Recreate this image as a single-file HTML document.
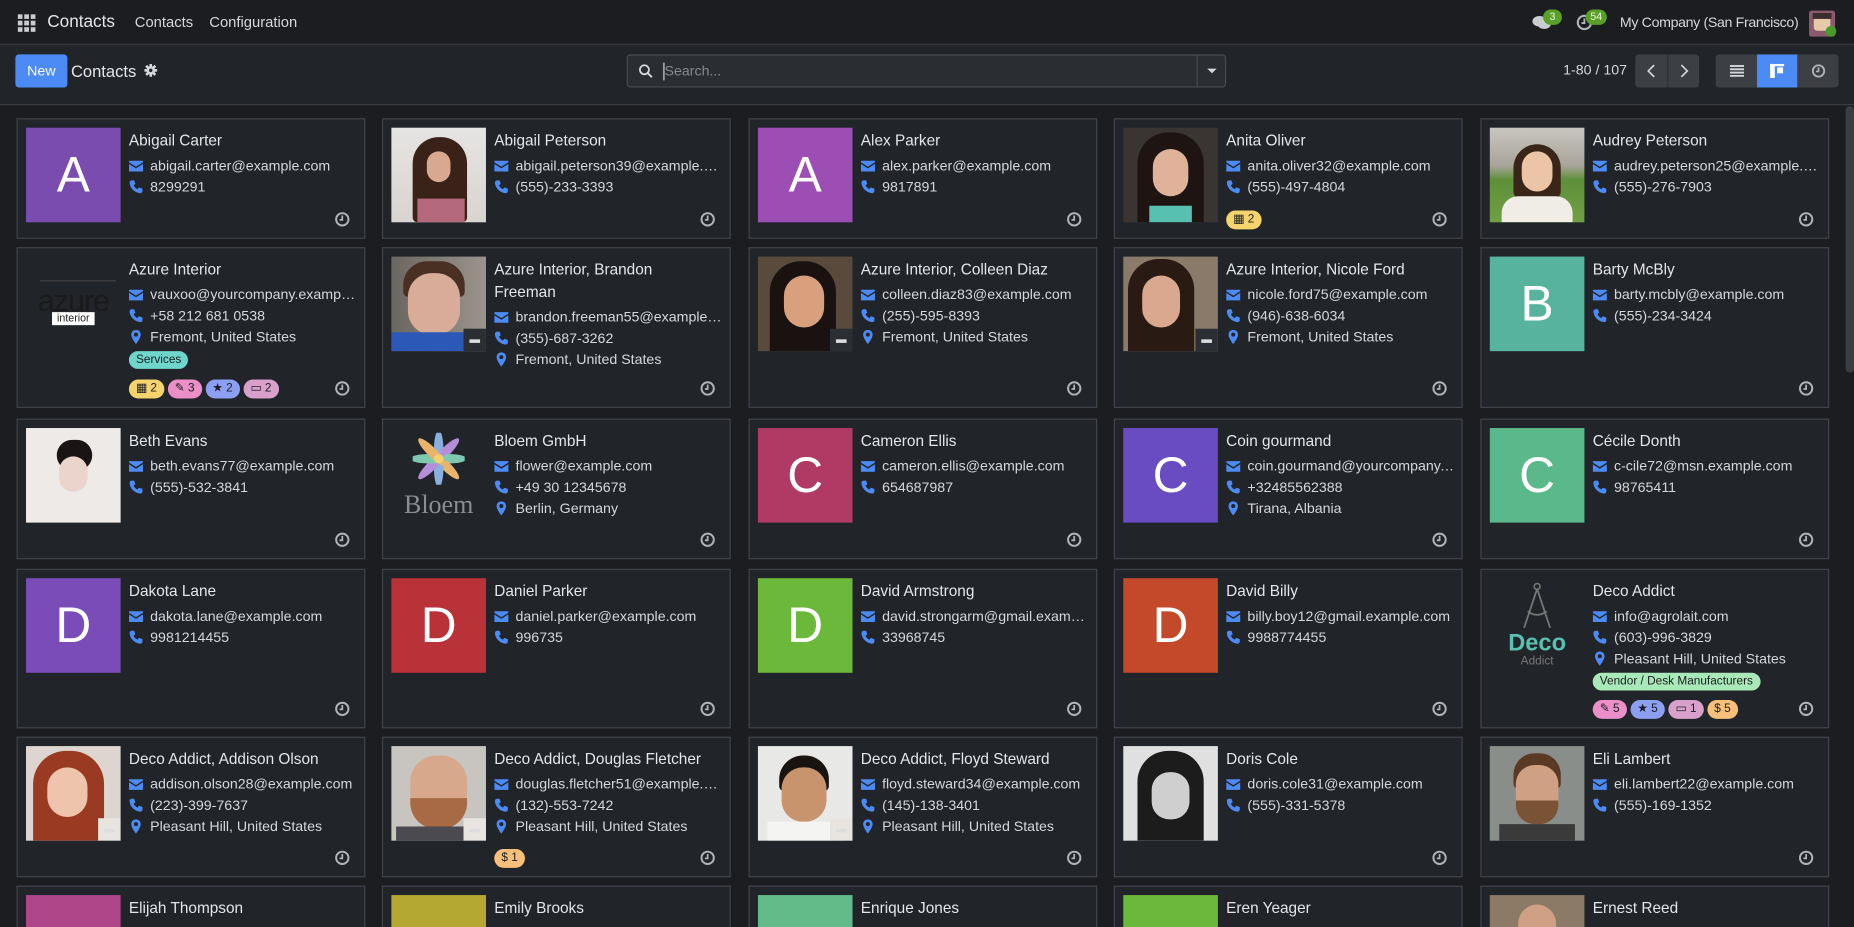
<!DOCTYPE html>
<html><head><meta charset="utf-8">
<style>
html,body{margin:0;padding:0;width:1854px;height:927px;overflow:hidden;background:#1b1d21;}
#w{position:absolute;left:0;top:0;width:1568px;height:784px;transform:scale(1.18240);transform-origin:0 0;font-family:"Liberation Sans",sans-serif;color:#dee2e6;background:#1b1d21;overflow:hidden}
.nav{position:absolute;left:0;top:0;width:1568px;height:38px;background:#1b1d21;border-bottom:1px solid #3a3d42;box-sizing:border-box}
.cp{position:absolute;left:0;top:38px;width:1568px;height:51px;background:#212428;border-bottom:1px solid #3a3d42;box-sizing:border-box}
.abs{position:absolute}
.c{position:absolute;width:295px;background:#212429;border:1px solid #41454b;box-sizing:border-box;overflow:hidden}
.av{position:absolute;left:7px;top:7px;width:80px;height:80px;color:#fff;font-size:42px;text-align:center;line-height:80px;overflow:hidden}
.i{position:absolute;left:94px;top:8px;right:6px;font-size:12px}
.n{font-size:13px;line-height:19px;margin-bottom:3px;color:#e4e6e9;font-weight:500}
.l{line-height:18px;white-space:nowrap;overflow:hidden;text-overflow:ellipsis;color:#d4d7db}
.ic{width:12px;height:12px;vertical-align:-2px;margin-right:6px;fill:#4c8bf5}
.clk{position:absolute;right:12px;bottom:9px;width:13px;height:13px}
.tag{display:inline-block;font-size:10px;line-height:15px;padding:0 6px;border-radius:8px;color:#1b1d21;margin-top:3px}
.bd{position:absolute;left:94px;bottom:7px;font-size:10px}
.b{display:inline-block;height:16px;line-height:16px;padding:0 6px;border-radius:8px;color:#1b1d21;margin-right:3px}
.ov{position:absolute;right:0;bottom:0;width:19px;height:19px;background:#2b2e33}
.ov:after{content:"";position:absolute;left:5px;top:9px;width:9px;height:3px;background:#ddd}
</style></head><body><div id="w">
<svg width="0" height="0" style="position:absolute">
<symbol id="em" viewBox="0 0 12 12"><path d="M0 2h12v1.2L6 7 0 3.2z M0 4.6l6 3.8 6-3.8V11H0z"/></symbol>
<symbol id="ph" viewBox="0 0 12 12"><path d="M2.5 0.5l2 0 1 3-1.5 1.2c.8 1.7 1.8 2.6 3.3 3.3L8.5 6.5l3 1v2.3c0 .9-.9 1.7-2 1.6C4.8 11 .8 7 .6 2.5.5 1.4 1.4.5 2.5.5z"/></symbol>
<symbol id="pn" viewBox="0 0 12 12"><path d="M6 0C3.6 0 2 1.7 2 4c0 3 4 8 4 8s4-5 4-8c0-2.3-1.6-4-4-4zm0 2.3a1.7 1.7 0 110 3.4 1.7 1.7 0 010-3.4z"/></symbol>
<symbol id="ck" viewBox="0 0 14 14"><circle cx="7" cy="7" r="5.6" fill="none" stroke="#b0b3b8" stroke-width="1.8"/><path d="M7 3.5V7.5H4.5" fill="none" stroke="#b0b3b8" stroke-width="1.6"/></symbol>
</svg>

<div class="nav">
<svg class="abs" style="left:15px;top:12px" width="15" height="15" viewBox="0 0 15 15" fill="#c9ccd0"><rect x="0" y="0" width="4" height="4"/><rect x="5.5" y="0" width="4" height="4"/><rect x="11" y="0" width="4" height="4"/><rect x="0" y="5.5" width="4" height="4"/><rect x="5.5" y="5.5" width="4" height="4"/><rect x="11" y="5.5" width="4" height="4"/><rect x="0" y="11" width="4" height="4"/><rect x="5.5" y="11" width="4" height="4"/><rect x="11" y="11" width="4" height="4"/></svg>
<div class="abs" style="left:40px;top:11px;font-size:14.5px;color:#e4e6e9">Contacts</div>
<div class="abs" style="left:114px;top:12px;font-size:12.5px;color:#d4d7db">Contacts</div>
<div class="abs" style="left:177px;top:12px;font-size:12.5px;color:#d4d7db">Configuration</div>
<svg class="abs" style="left:1296px;top:12px" width="16" height="14" viewBox="0 0 16 14" fill="#c9ccd0"><ellipse cx="6" cy="6" rx="6" ry="4.5"/><ellipse cx="10" cy="8.5" rx="5.5" ry="4"/></svg>
<div class="abs" style="left:1305px;top:8px;width:16px;height:13px;border-radius:7px;background:#5aa028;font-size:9px;color:#e8f5dd;text-align:center;line-height:13px">3</div>
<svg class="abs" style="left:1333px;top:12px" width="14" height="14"><use href="#ck"/></svg>
<div class="abs" style="left:1341px;top:8px;width:18px;height:13px;border-radius:7px;background:#5aa028;font-size:9px;color:#e8f5dd;text-align:center;line-height:13px">54</div>
<div class="abs" style="left:1370px;top:12px;width:152px;font-size:12px;letter-spacing:-0.3px;white-space:nowrap;color:#d4d7db">My Company (San Francisco)</div>
<div class="abs" style="left:1530px;top:9px;width:22px;height:22px;background:#8c5a6e;border-radius:2px"><div style="position:absolute;left:4px;top:5px;width:14px;height:12px;background:#e6c9a8;border-radius:3px"></div><div style="position:absolute;left:3px;top:2px;width:16px;height:5px;background:#3b2d2d"></div></div>
<div class="abs" style="left:1544px;top:22px;width:9px;height:9px;border-radius:50%;background:#4a9a2a"></div>
</div>

<div class="cp">
<div class="abs" style="left:13px;top:8px;width:44px;height:28px;background:#4c8bf5;border-radius:3px;color:#fff;font-size:12px;text-align:center;line-height:28px">New</div>
<div class="abs" style="left:60px;top:14px;font-size:14px;color:#e4e6e9">Contacts</div>
<svg class="abs" style="left:122px;top:16px" width="11" height="11" viewBox="0 0 12 12"><g fill="#d4d7db"><rect x="4.8" y="0" width="2.4" height="12"/><rect x="0" y="4.8" width="12" height="2.4"/><rect x="4.8" y="0" width="2.4" height="12" transform="rotate(45 6 6)"/><rect x="4.8" y="0" width="2.4" height="12" transform="rotate(-45 6 6)"/><circle cx="6" cy="6" r="4"/></g><circle cx="6" cy="6" r="1.6" fill="#212428"/></svg>
<div class="abs" style="left:530px;top:8px;width:507px;height:28px;background:#2a2d32;border:1px solid #494d53;border-radius:3px;box-sizing:border-box">
<svg class="abs" style="left:9px;top:7px" width="12" height="12" viewBox="0 0 12 12"><circle cx="5" cy="5" r="3.8" fill="none" stroke="#d4d7db" stroke-width="1.5"/><path d="M7.8 7.8L11.3 11.3" stroke="#d4d7db" stroke-width="1.6"/></svg>
<div class="abs" style="left:30px;top:6px;width:1px;height:15px;background:#d4d7db"></div>
<div class="abs" style="left:31px;top:6px;font-size:12px;color:#868a90">Search...</div>
<div class="abs" style="left:481px;top:0;width:1px;height:26px;background:#494d53"></div>
<div class="abs" style="left:490px;top:11px;width:0;height:0;border-left:4px solid transparent;border-right:4px solid transparent;border-top:4px solid #d4d7db"></div>
</div>
<div class="abs" style="left:1322px;top:14px;font-size:12px;color:#d4d7db">1-80 / 107</div>
<div class="abs" style="left:1383px;top:8px;width:54px;height:28px;background:#3c3f44;border-radius:3px">
<div class="abs" style="left:27px;top:0;width:1px;height:28px;background:#2a2d31"></div>
<svg class="abs" style="left:9px;top:8px" width="10" height="12"><path d="M7 1L2 6l5 5" fill="none" stroke="#d4d7db" stroke-width="1.4"/></svg>
<svg class="abs" style="left:36px;top:8px" width="10" height="12"><path d="M3 1l5 5-5 5" fill="none" stroke="#d4d7db" stroke-width="1.4"/></svg>
</div>
<div class="abs" style="left:1451px;top:8px;width:104px;height:28px;background:#3c3f44;border-radius:3px;overflow:hidden">
<svg class="abs" style="left:12px;top:9px" width="12" height="10" fill="#d4d7db"><rect y="0" width="12" height="1.6"/><rect y="2.8" width="12" height="1.6"/><rect y="5.6" width="12" height="1.6"/><rect y="8.4" width="12" height="1.6"/></svg>
<div class="abs" style="left:35px;top:0;width:34px;height:28px;background:#4c8bf5"></div>
<svg class="abs" style="left:46px;top:8px" width="12" height="12" fill="#fff"><rect x="0" y="0" width="12" height="2"/><rect x="0" y="0" width="4" height="12"/><rect x="6" y="3" width="5" height="5"/></svg>
<svg class="abs" style="left:81px;top:8px" width="12" height="12" viewBox="0 0 14 14"><use href="#ck"/></svg>
</div>
</div>

<div class="abs" style="left:1561px;top:90px;width:7px;height:225px;background:#3a3d42;border-radius:3px"></div>

<!-- ROW 1 -->
<div class="c" style="left:14px;top:100px;height:102px"><div class="av" style="background:#7a4cb0">A</div><div class="i"><div class="n">Abigail Carter</div><div class="l"><svg class="ic"><use href="#em"/></svg>abigail.carter@example.com</div><div class="l"><svg class="ic"><use href="#ph"/></svg>8299291</div></div><svg class="clk"><use href="#ck"/></svg></div>
<div class="c" style="left:323px;top:100px;height:102px"><div class="av" style="background:linear-gradient(#e6e4e2,#d8d4d0)"><div style="position:absolute;left:18px;top:8px;width:46px;height:72px;background:#3a2218;border-radius:22px 22px 4px 4px"></div><div style="position:absolute;left:30px;top:20px;width:20px;height:26px;background:#d9a890;border-radius:10px"></div><div style="position:absolute;left:22px;top:60px;width:40px;height:20px;background:#b46a7c"></div></div><div class="i"><div class="n">Abigail Peterson</div><div class="l"><svg class="ic"><use href="#em"/></svg>abigail.peterson39@example.com</div><div class="l"><svg class="ic"><use href="#ph"/></svg>(555)-233-3393</div></div><svg class="clk"><use href="#ck"/></svg></div>
<div class="c" style="left:633px;top:100px;height:102px"><div class="av" style="background:#9c4eb4">A</div><div class="i"><div class="n">Alex Parker</div><div class="l"><svg class="ic"><use href="#em"/></svg>alex.parker@example.com</div><div class="l"><svg class="ic"><use href="#ph"/></svg>9817891</div></div><svg class="clk"><use href="#ck"/></svg></div>
<div class="c" style="left:942px;top:100px;height:102px"><div class="av" style="background:#3a3532"><div style="position:absolute;left:12px;top:4px;width:56px;height:76px;background:#1e1512;border-radius:26px 26px 0 0"></div><div style="position:absolute;left:25px;top:18px;width:30px;height:40px;background:#e1b29a;border-radius:15px"></div><div style="position:absolute;left:22px;top:66px;width:36px;height:14px;background:#58c0b0"></div></div><div class="i"><div class="n">Anita Oliver</div><div class="l"><svg class="ic"><use href="#em"/></svg>anita.oliver32@example.com</div><div class="l"><svg class="ic"><use href="#ph"/></svg>(555)-497-4804</div></div><div class="bd"><span class="b" style="background:#f5d46e">▦ 2</span></div><svg class="clk"><use href="#ck"/></svg></div>
<div class="c" style="left:1252px;top:100px;height:102px"><div class="av" style="background:linear-gradient(#c8c6c0 0%,#a8a49a 40%,#5f8f3a 55%,#6fa044 100%)"><div style="position:absolute;left:20px;top:14px;width:40px;height:46px;background:#3a2618;border-radius:20px 20px 6px 6px"></div><div style="position:absolute;left:27px;top:20px;width:26px;height:34px;background:#ecc4a6;border-radius:13px"></div><div style="position:absolute;left:10px;top:58px;width:60px;height:22px;background:#f0ece6;border-radius:14px 14px 0 0"></div></div><div class="i"><div class="n">Audrey Peterson</div><div class="l"><svg class="ic"><use href="#em"/></svg>audrey.peterson25@example.com</div><div class="l"><svg class="ic"><use href="#ph"/></svg>(555)-276-7903</div></div><svg class="clk"><use href="#ck"/></svg></div>

<!-- ROW 2 -->
<div class="c" style="left:14px;top:209px;height:136px"><div class="av" style="background:transparent"><div style="position:absolute;left:12px;top:20px;width:64px;height:1px;background:#444"></div><div style="position:absolute;left:0;top:22px;width:80px;font-size:26px;line-height:30px;color:#1a1a1a;letter-spacing:-1px;font-weight:300">azure</div><div style="position:absolute;left:22px;top:47px;width:36px;height:11px;background:#fff;color:#222;font-size:9px;line-height:11px">interior</div></div><div class="i"><div class="n">Azure Interior</div><div class="l"><svg class="ic"><use href="#em"/></svg>vauxoo@yourcompany.example.com</div><div class="l"><svg class="ic"><use href="#ph"/></svg>+58 212 681 0538</div><div class="l"><svg class="ic"><use href="#pn"/></svg>Fremont, United States</div><span class="tag" style="background:#6fd6cb">Services</span></div><div class="bd"><span class="b" style="background:#f5d46e">▦ 2</span><span class="b" style="background:#ea8fc8">✎ 3</span><span class="b" style="background:#8c9ff2">★ 2</span><span class="b" style="background:#d9a0cc">▭ 2</span></div><svg class="clk"><use href="#ck"/></svg></div>
<div class="c" style="left:323px;top:209px;height:136px"><div class="av" style="background:linear-gradient(90deg,#6a6660,#9a948c)"><div style="position:absolute;left:10px;top:4px;width:52px;height:30px;background:#4a3022;border-radius:20px 20px 4px 4px"></div><div style="position:absolute;left:14px;top:14px;width:44px;height:52px;background:#d8ac98;border-radius:20px"></div><div style="position:absolute;left:0;top:64px;width:80px;height:16px;background:#2c58b8"></div><div class="ov"></div></div><div class="i"><div class="n">Azure Interior, Brandon<br>Freeman</div><div class="l"><svg class="ic"><use href="#em"/></svg>brandon.freeman55@example.com</div><div class="l"><svg class="ic"><use href="#ph"/></svg>(355)-687-3262</div><div class="l"><svg class="ic"><use href="#pn"/></svg>Fremont, United States</div></div><svg class="clk"><use href="#ck"/></svg></div>
<div class="c" style="left:633px;top:209px;height:136px"><div class="av" style="background:#5a4a3c"><div style="position:absolute;left:10px;top:4px;width:56px;height:76px;background:#1a1210;border-radius:26px 26px 0 0"></div><div style="position:absolute;left:22px;top:16px;width:34px;height:44px;background:#d8a07c;border-radius:17px"></div><div class="ov"></div></div><div class="i"><div class="n">Azure Interior, Colleen Diaz</div><div class="l"><svg class="ic"><use href="#em"/></svg>colleen.diaz83@example.com</div><div class="l"><svg class="ic"><use href="#ph"/></svg>(255)-595-8393</div><div class="l"><svg class="ic"><use href="#pn"/></svg>Fremont, United States</div></div><svg class="clk"><use href="#ck"/></svg></div>
<div class="c" style="left:942px;top:209px;height:136px"><div class="av" style="background:#8a7a6a"><div style="position:absolute;left:4px;top:2px;width:56px;height:78px;background:#2a1a14;border-radius:26px 26px 0 0"></div><div style="position:absolute;left:16px;top:16px;width:32px;height:44px;background:#d9a88e;border-radius:16px"></div><div class="ov"></div></div><div class="i"><div class="n">Azure Interior, Nicole Ford</div><div class="l"><svg class="ic"><use href="#em"/></svg>nicole.ford75@example.com</div><div class="l"><svg class="ic"><use href="#ph"/></svg>(946)-638-6034</div><div class="l"><svg class="ic"><use href="#pn"/></svg>Fremont, United States</div></div><svg class="clk"><use href="#ck"/></svg></div>
<div class="c" style="left:1252px;top:209px;height:136px"><div class="av" style="background:#58b39c">B</div><div class="i"><div class="n">Barty McBly</div><div class="l"><svg class="ic"><use href="#em"/></svg>barty.mcbly@example.com</div><div class="l"><svg class="ic"><use href="#ph"/></svg>(555)-234-3424</div></div><svg class="clk"><use href="#ck"/></svg></div>

<!-- ROW 3 -->
<div class="c" style="left:14px;top:354px;height:119px"><div class="av" style="background:#eeeae8"><div style="position:absolute;left:26px;top:10px;width:30px;height:26px;background:#1a1414;border-radius:14px"></div><div style="position:absolute;left:28px;top:24px;width:24px;height:30px;background:#ead4cc;border-radius:12px"></div></div><div class="i"><div class="n">Beth Evans</div><div class="l"><svg class="ic"><use href="#em"/></svg>beth.evans77@example.com</div><div class="l"><svg class="ic"><use href="#ph"/></svg>(555)-532-3841</div></div><svg class="clk"><use href="#ck"/></svg></div>
<div class="c" style="left:323px;top:354px;height:119px"><div class="av" style="background:transparent"><svg style="position:absolute;left:18px;top:4px" width="44" height="44" viewBox="0 0 44 44"><g transform="translate(22 22)"><ellipse rx="4" ry="16" cy="-8" fill="#8ab0e0"/><ellipse rx="4" ry="16" cy="-8" fill="#b48ed8" transform="rotate(45)"/><ellipse rx="4" ry="16" cy="-8" fill="#7ec8b0" transform="rotate(90)"/><ellipse rx="4" ry="16" cy="-8" fill="#e8b46a" transform="rotate(135)"/><ellipse rx="4" ry="16" cy="-8" fill="#8ab0e0" transform="rotate(180)"/><ellipse rx="4" ry="16" cy="-8" fill="#b48ed8" transform="rotate(225)"/><ellipse rx="4" ry="16" cy="-8" fill="#7ec8b0" transform="rotate(270)"/><ellipse rx="4" ry="16" cy="-8" fill="#e8b46a" transform="rotate(315)"/><circle r="4" fill="#f0d070"/></g></svg><div style="position:absolute;left:0;top:52px;width:80px;font-family:'Liberation Serif',serif;font-size:22px;line-height:26px;color:#8a8e94">Bloem</div></div><div class="i"><div class="n">Bloem GmbH</div><div class="l"><svg class="ic"><use href="#em"/></svg>flower@example.com</div><div class="l"><svg class="ic"><use href="#ph"/></svg>+49 30 12345678</div><div class="l"><svg class="ic"><use href="#pn"/></svg>Berlin, Germany</div></div><svg class="clk"><use href="#ck"/></svg></div>
<div class="c" style="left:633px;top:354px;height:119px"><div class="av" style="background:#b03a64">C</div><div class="i"><div class="n">Cameron Ellis</div><div class="l"><svg class="ic"><use href="#em"/></svg>cameron.ellis@example.com</div><div class="l"><svg class="ic"><use href="#ph"/></svg>654687987</div></div><svg class="clk"><use href="#ck"/></svg></div>
<div class="c" style="left:942px;top:354px;height:119px"><div class="av" style="background:#6a4cc2">C</div><div class="i"><div class="n">Coin gourmand</div><div class="l"><svg class="ic"><use href="#em"/></svg>coin.gourmand@yourcompany.example.com</div><div class="l"><svg class="ic"><use href="#ph"/></svg>+32485562388</div><div class="l"><svg class="ic"><use href="#pn"/></svg>Tirana, Albania</div></div><svg class="clk"><use href="#ck"/></svg></div>
<div class="c" style="left:1252px;top:354px;height:119px"><div class="av" style="background:#5bb88a">C</div><div class="i"><div class="n">Cécile Donth</div><div class="l"><svg class="ic"><use href="#em"/></svg>c-cile72@msn.example.com</div><div class="l"><svg class="ic"><use href="#ph"/></svg>98765411</div></div><svg class="clk"><use href="#ck"/></svg></div>

<!-- ROW 4 -->
<div class="c" style="left:14px;top:481px;height:135px"><div class="av" style="background:#7a4cb8">D</div><div class="i"><div class="n">Dakota Lane</div><div class="l"><svg class="ic"><use href="#em"/></svg>dakota.lane@example.com</div><div class="l"><svg class="ic"><use href="#ph"/></svg>9981214455</div></div><svg class="clk"><use href="#ck"/></svg></div>
<div class="c" style="left:323px;top:481px;height:135px"><div class="av" style="background:#b83238">D</div><div class="i"><div class="n">Daniel Parker</div><div class="l"><svg class="ic"><use href="#em"/></svg>daniel.parker@example.com</div><div class="l"><svg class="ic"><use href="#ph"/></svg>996735</div></div><svg class="clk"><use href="#ck"/></svg></div>
<div class="c" style="left:633px;top:481px;height:135px"><div class="av" style="background:#6cb83a">D</div><div class="i"><div class="n">David Armstrong</div><div class="l"><svg class="ic"><use href="#em"/></svg>david.strongarm@gmail.example.com</div><div class="l"><svg class="ic"><use href="#ph"/></svg>33968745</div></div><svg class="clk"><use href="#ck"/></svg></div>
<div class="c" style="left:942px;top:481px;height:135px"><div class="av" style="background:#c4492a">D</div><div class="i"><div class="n">David Billy</div><div class="l"><svg class="ic"><use href="#em"/></svg>billy.boy12@gmail.example.com</div><div class="l"><svg class="ic"><use href="#ph"/></svg>9988774455</div></div><svg class="clk"><use href="#ck"/></svg></div>
<div class="c" style="left:1252px;top:481px;height:135px"><div class="av" style="background:transparent"><svg style="position:absolute;left:26px;top:2px" width="28" height="44" viewBox="0 0 28 44"><circle cx="14" cy="5" r="2.5" fill="none" stroke="#777" stroke-width="1.3"/><path d="M14 7L3 40M14 7l11 33M6 26q8 6 16 0" fill="none" stroke="#777" stroke-width="1.5"/></svg><div style="position:absolute;left:0;top:44px;width:80px;font-size:20px;font-weight:bold;line-height:22px;color:#5ac0b0">Deco</div><div style="position:absolute;left:0;top:65px;width:80px;font-size:10px;line-height:12px;color:#777">Addict</div></div><div class="i"><div class="n">Deco Addict</div><div class="l"><svg class="ic"><use href="#em"/></svg>info@agrolait.com</div><div class="l"><svg class="ic"><use href="#ph"/></svg>(603)-996-3829</div><div class="l"><svg class="ic"><use href="#pn"/></svg>Pleasant Hill, United States</div><span class="tag" style="background:#a9e8b8">Vendor / Desk Manufacturers</span></div><div class="bd"><span class="b" style="background:#ea8fc8">✎ 5</span><span class="b" style="background:#8c9ff2">★ 5</span><span class="b" style="background:#d9a0cc">▭ 1</span><span class="b" style="background:#f7c07a">$ 5</span></div><svg class="clk"><use href="#ck"/></svg></div>

<!-- ROW 5 -->
<div class="c" style="left:14px;top:623px;height:119px"><div class="av" style="background:#ddd6d0"><div style="position:absolute;left:6px;top:4px;width:60px;height:76px;background:#9a3a22;border-radius:28px 28px 0 0"></div><div style="position:absolute;left:18px;top:18px;width:34px;height:42px;background:#eec4ac;border-radius:17px"></div><div class="ov" style="background:#e8e4e0"></div></div><div class="i"><div class="n">Deco Addict, Addison Olson</div><div class="l"><svg class="ic"><use href="#em"/></svg>addison.olson28@example.com</div><div class="l"><svg class="ic"><use href="#ph"/></svg>(223)-399-7637</div><div class="l"><svg class="ic"><use href="#pn"/></svg>Pleasant Hill, United States</div></div><svg class="clk"><use href="#ck"/></svg></div>
<div class="c" style="left:323px;top:623px;height:119px"><div class="av" style="background:#c8c4c0"><div style="position:absolute;left:16px;top:8px;width:48px;height:62px;background:#d8a88c;border-radius:22px"></div><div style="position:absolute;left:16px;top:44px;width:48px;height:26px;background:#a86a44;border-radius:0 0 22px 22px"></div><div style="position:absolute;left:4px;top:68px;width:72px;height:12px;background:#4a4a50"></div><div class="ov" style="background:#e8e4e0"></div></div><div class="i"><div class="n">Deco Addict, Douglas Fletcher</div><div class="l"><svg class="ic"><use href="#em"/></svg>douglas.fletcher51@example.com</div><div class="l"><svg class="ic"><use href="#ph"/></svg>(132)-553-7242</div><div class="l"><svg class="ic"><use href="#pn"/></svg>Pleasant Hill, United States</div></div><div class="bd"><span class="b" style="background:#f7c07a">$ 1</span></div><svg class="clk"><use href="#ck"/></svg></div>
<div class="c" style="left:633px;top:623px;height:119px"><div class="av" style="background:#e8e8e6"><div style="position:absolute;left:18px;top:8px;width:42px;height:30px;background:#1a1410;border-radius:20px 20px 4px 4px"></div><div style="position:absolute;left:20px;top:18px;width:38px;height:46px;background:#c8946e;border-radius:18px"></div><div style="position:absolute;left:8px;top:64px;width:64px;height:16px;background:#f4f4f2"></div><div class="ov" style="background:#e8e4e0"></div></div><div class="i"><div class="n">Deco Addict, Floyd Steward</div><div class="l"><svg class="ic"><use href="#em"/></svg>floyd.steward34@example.com</div><div class="l"><svg class="ic"><use href="#ph"/></svg>(145)-138-3401</div><div class="l"><svg class="ic"><use href="#pn"/></svg>Pleasant Hill, United States</div></div><svg class="clk"><use href="#ck"/></svg></div>
<div class="c" style="left:942px;top:623px;height:119px"><div class="av" style="background:#e0e0e0"><div style="position:absolute;left:12px;top:4px;width:56px;height:76px;background:#1c1c1c;border-radius:26px 26px 0 0"></div><div style="position:absolute;left:24px;top:22px;width:32px;height:40px;background:#cfcfcf;border-radius:15px"></div></div><div class="i"><div class="n">Doris Cole</div><div class="l"><svg class="ic"><use href="#em"/></svg>doris.cole31@example.com</div><div class="l"><svg class="ic"><use href="#ph"/></svg>(555)-331-5378</div></div><svg class="clk"><use href="#ck"/></svg></div>
<div class="c" style="left:1252px;top:623px;height:119px"><div class="av" style="background:#8a8e8a"><div style="position:absolute;left:20px;top:6px;width:40px;height:30px;background:#5a3a24;border-radius:18px 18px 4px 4px"></div><div style="position:absolute;left:22px;top:16px;width:36px;height:50px;background:#d0a084;border-radius:16px"></div><div style="position:absolute;left:22px;top:46px;width:36px;height:20px;background:#7a5236;border-radius:0 0 16px 16px"></div><div style="position:absolute;left:8px;top:66px;width:64px;height:14px;background:#3a3a3a"></div></div><div class="i"><div class="n">Eli Lambert</div><div class="l"><svg class="ic"><use href="#em"/></svg>eli.lambert22@example.com</div><div class="l"><svg class="ic"><use href="#ph"/></svg>(555)-169-1352</div></div><svg class="clk"><use href="#ck"/></svg></div>

<!-- ROW 6 -->
<div class="c" style="left:14px;top:749px;height:35px;border-bottom:none"><div class="av" style="background:#b0468a"></div><div class="i"><div class="n">Elijah Thompson</div></div></div>
<div class="c" style="left:323px;top:749px;height:35px;border-bottom:none"><div class="av" style="background:#b5a832"></div><div class="i"><div class="n">Emily Brooks</div></div></div>
<div class="c" style="left:633px;top:749px;height:35px;border-bottom:none"><div class="av" style="background:#62bc8a"></div><div class="i"><div class="n">Enrique Jones</div></div></div>
<div class="c" style="left:942px;top:749px;height:35px;border-bottom:none"><div class="av" style="background:#6cb83a"></div><div class="i"><div class="n">Eren Yeager</div></div></div>
<div class="c" style="left:1252px;top:749px;height:35px;border-bottom:none"><div class="av" style="background:#8a7a66"><div style="position:absolute;left:24px;top:8px;width:32px;height:40px;background:#d0a084;border-radius:16px"></div></div><div class="i"><div class="n">Ernest Reed</div></div></div>

</div></body></html>
